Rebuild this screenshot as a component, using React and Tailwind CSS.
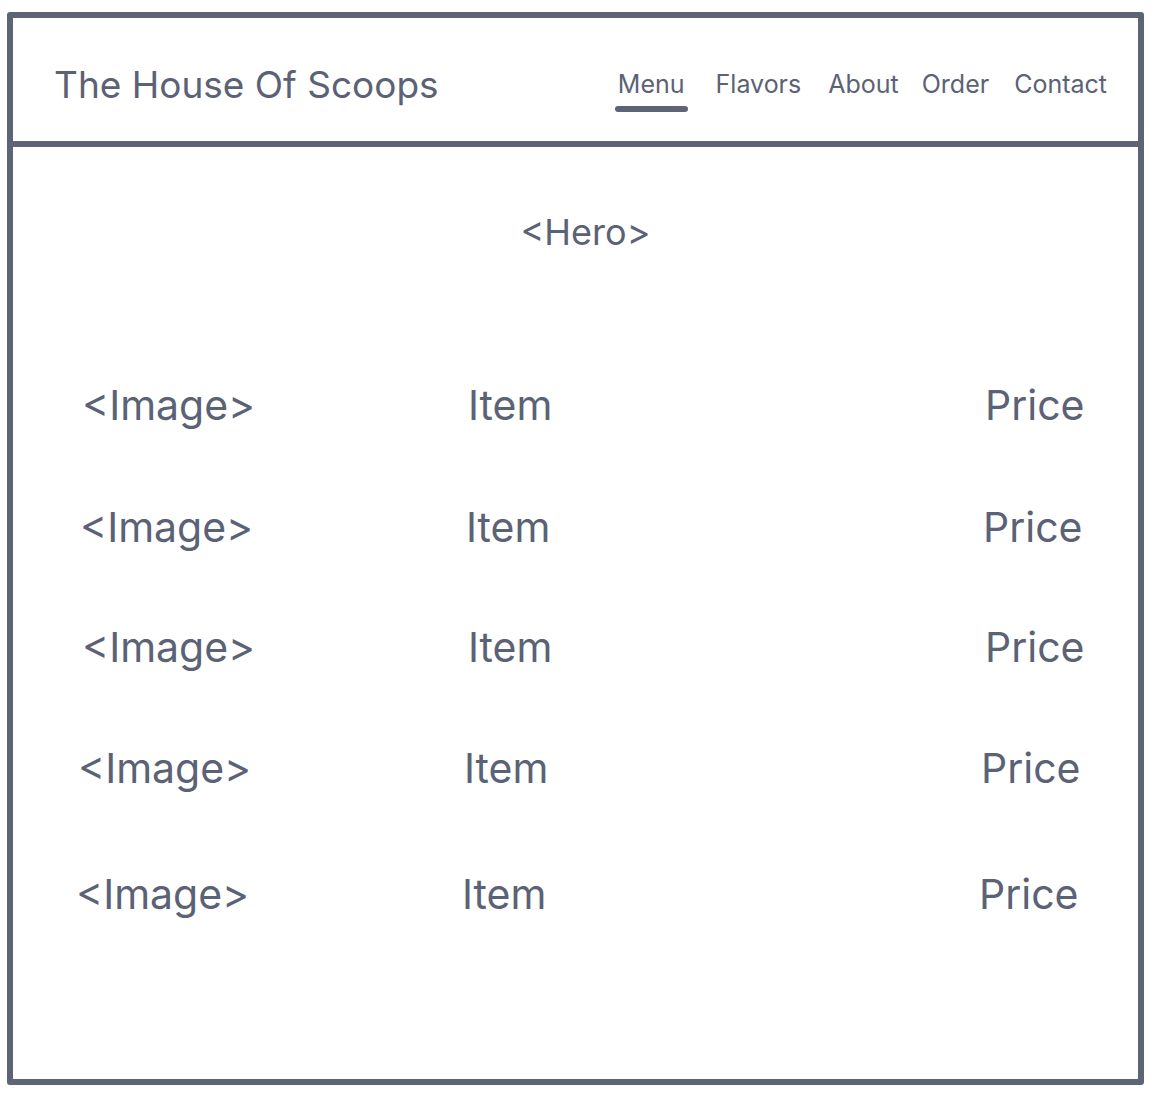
const rows = [
  { mt: 'mt-[127px]', pl: 'pl-[69px]' },
  { mt: 'mt-[74px]', pl: 'pl-[67px]' },
  { mt: 'mt-[72px]', pl: 'pl-[69px]' },
  { mt: 'mt-[73px]', pl: 'pl-[65px]' },
  { mt: 'mt-[78px]', pl: 'pl-[63px]' },
];

const navLinks = [
  { label: 'Menu', className: 'relative' },
  { label: 'Flavors', className: 'ml-[31px]' },
  { label: 'About', className: 'ml-[27px]' },
  { label: 'Order', className: 'ml-[23px]' },
  { label: 'Contact', className: 'ml-[25px]' },
];

export default function App() {
  return (
    <div className="min-h-screen bg-white pt-[12px] pl-[7px] font-['Inter','Liberation_Sans',sans-serif] text-[#5b6275]">
      <div className="w-[1137px] h-[1073px] border-[6px] border-[#5d6475] rounded-[3px] flex flex-col">
        <header className="h-[129px] shrink-0 border-b-[6px] border-[#5d6475] flex items-center justify-between pt-[10px] pl-[41px] pr-[31px]">
          <h1 className="text-[37px] leading-none">The House Of Scoops</h1>
          <nav className="flex items-center text-[25px] leading-none">
            {navLinks.map((link) => (
              <a key={link.label} href="#" className={link.className}>
                {link.label}
                {link.label === 'Menu' && (
                  <span className="absolute -left-[3px] -right-[3px] top-[34px] h-[6px] rounded-full bg-[#5d6475]" />
                )}
              </a>
            ))}
          </nav>
        </header>

        <main className="flex flex-col">
          <div className="pt-[63px] pl-[20px] text-center text-[36px] leading-[44px]">&lt;Hero&gt;</div>
          {rows.map((row, i) => (
            <div key={i} className={`${row.mt} ${row.pl} flex items-center text-[41px] leading-[48px]`}>
              <span className="w-[386px]">&lt;Image&gt;</span>
              <span className="w-[517px]">Item</span>
              <span>Price</span>
            </div>
          ))}
        </main>
      </div>
    </div>
  );
}
